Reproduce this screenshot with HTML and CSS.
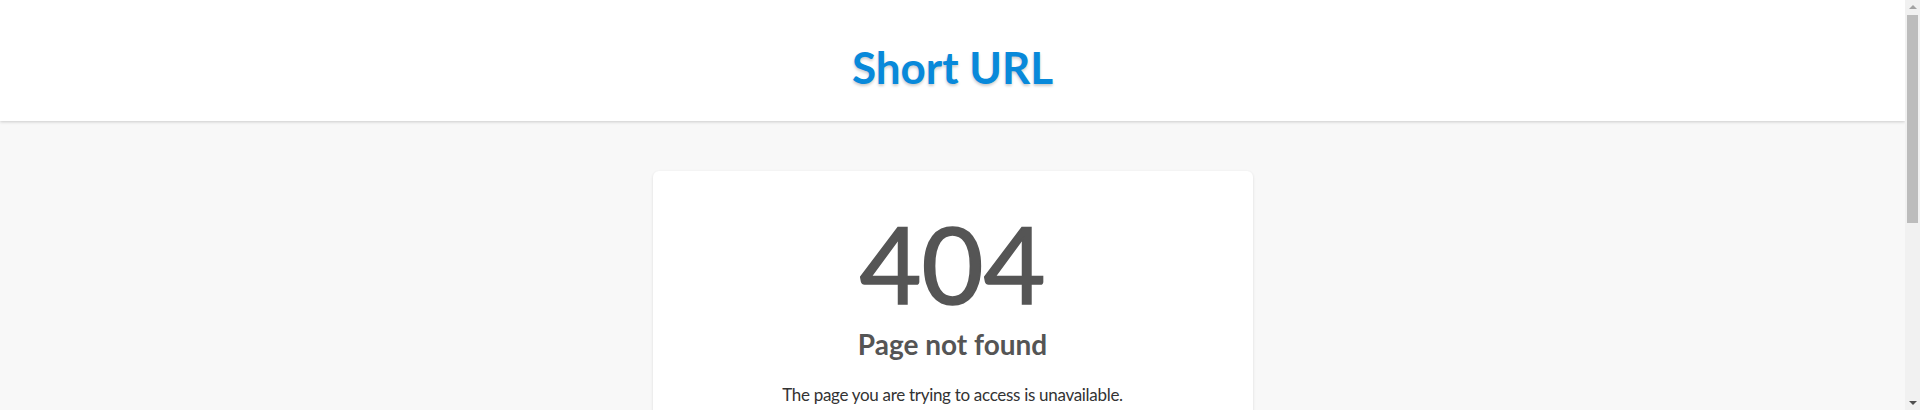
FILE: index.html
```html
<!DOCTYPE html>
<html lang="en">
<head>
<meta charset="utf-8">
<title>Short URL - Page not found</title>
<link rel="stylesheet" href="styles.css">
</head>
<body>
<div class="page">
  <header class="site-header">
    <h1 class="brand">Short URL</h1>
  </header>
  <main class="content">
    <section class="card">
      <div class="code">404</div>
      <h2 class="heading">Page not found</h2>
      <p class="message">The page you are trying to access is unavailable.</p>
    </section>
  </main>
</div>
<div class="scrollbar" aria-hidden="true">
  <span class="arrow arrow-up"></span>
  <span class="thumb"></span>
  <span class="arrow arrow-down"></span>
</div>
</body>
</html>
```

FILE: styles.css
```css
html, body {
  margin: 0;
  padding: 0;
}
body {
  background: #f8f8f8;
  font-family: Lato, "Open Sans", "Noto Sans", sans-serif;
  color: #555555;
}
.page {
  margin-right: 15px;
}
.site-header {
  height: 121px;
  background: #ffffff;
  box-shadow: 0 1px 3px rgba(0, 0, 0, 0.18);
  display: flex;
  align-items: center;
  justify-content: center;
  position: relative;
  z-index: 1;
}
.brand {
  margin: 0;
  font-size: 44px;
  font-weight: 700;
  line-height: 1;
  color: #0889da;
  text-shadow: 0 2px 3px rgba(0, 0, 0, 0.2);
  padding-top: 12px;
}
.content {
  padding: 50px 0 50px;
  min-height: 532px;
}
.card {
  width: 600px;
  margin: 0 auto;
  background: #ffffff;
  border-radius: 6px;
  box-shadow: 0 1px 3px rgba(0, 0, 0, 0.12);
  text-align: center;
  padding: 38px 20px 60px;
  box-sizing: border-box;
}
.code {
  font-size: 107px;
  line-height: 1;
  font-weight: 400;
  -webkit-text-stroke: 1.6px #555555;
}
.heading {
  margin: 12px 0 0;
  font-size: 28px;
  line-height: 1.2;
  font-weight: 700;
}
.message {
  margin: 20px 0 0;
  font-size: 17px;
  letter-spacing: -0.3px;
  line-height: 1.5;
  color: #333333;
}
.scrollbar {
  position: fixed;
  top: 0;
  right: 0;
  width: 15px;
  height: 100vh;
  background: #f1f1f1;
  display: flex;
  flex-direction: column;
  align-items: center;
  z-index: 5;
}
.arrow {
  width: 0;
  height: 0;
  border-left: 4px solid transparent;
  border-right: 4px solid transparent;
  flex: none;
}
.arrow-up {
  margin-top: 5px;
  border-bottom: 4px solid #a3a3a3;
}
.arrow-down {
  margin-top: auto;
  margin-bottom: 5px;
  border-top: 4px solid #505050;
}
.thumb {
  margin-top: 6px;
  width: 11px;
  height: 208px;
  background: #bcbcbc;
  margin-left: 2px;
  margin-right: 0;
  align-self: flex-start;
}
```
